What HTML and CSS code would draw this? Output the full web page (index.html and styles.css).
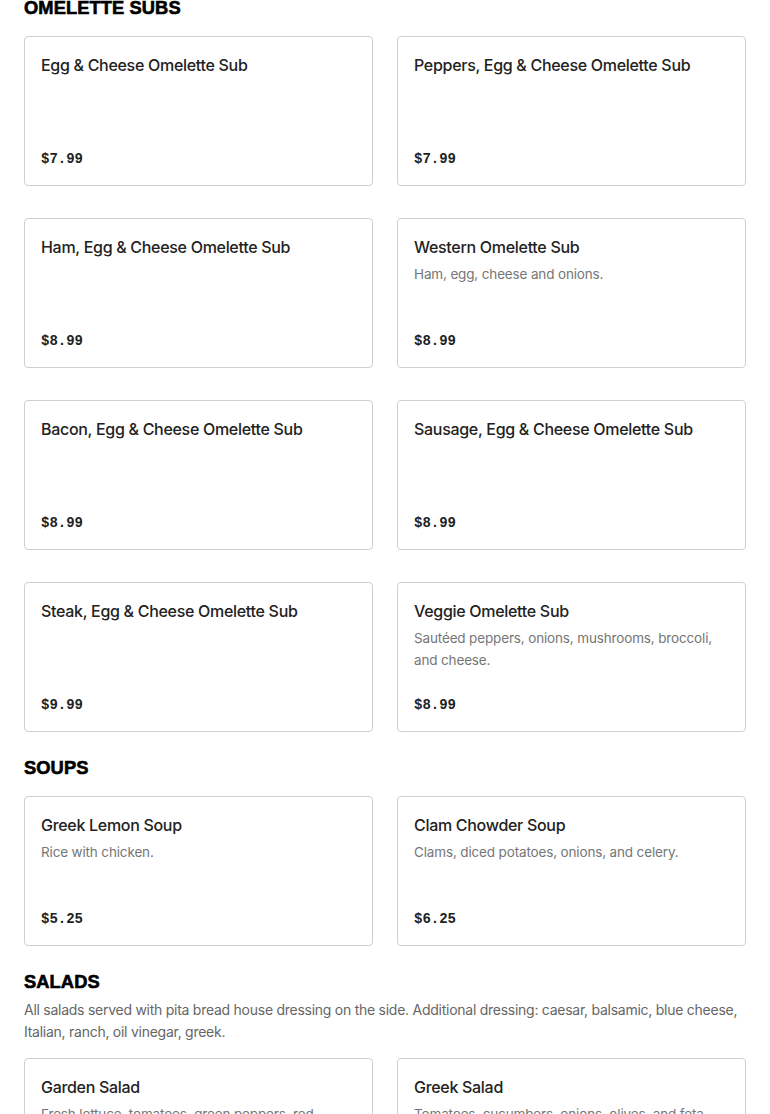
FILE: index.html
```html
<!DOCTYPE html>
<html lang="en">
<head>
<meta charset="utf-8">
<title>Menu</title>
<link rel="stylesheet" href="styles.css">
</head>
<body>
<main class="menu">
  <section class="section section-first">
    <h2 class="section-title">OMELETTE SUBS</h2>
    <div class="grid">
      <div class="card"><h3 class="item-name">Egg &amp; Cheese Omelette Sub</h3><div class="price">$7.99</div></div>
      <div class="card"><h3 class="item-name">Peppers, Egg &amp; Cheese Omelette Sub</h3><div class="price">$7.99</div></div>
      <div class="card"><h3 class="item-name">Ham, Egg &amp; Cheese Omelette Sub</h3><div class="price">$8.99</div></div>
      <div class="card"><h3 class="item-name">Western Omelette Sub</h3><p class="item-desc">Ham, egg, cheese and onions.</p><div class="price">$8.99</div></div>
      <div class="card"><h3 class="item-name">Bacon, Egg &amp; Cheese Omelette Sub</h3><div class="price">$8.99</div></div>
      <div class="card"><h3 class="item-name">Sausage, Egg &amp; Cheese Omelette Sub</h3><div class="price">$8.99</div></div>
      <div class="card"><h3 class="item-name">Steak, Egg &amp; Cheese Omelette Sub</h3><div class="price">$9.99</div></div>
      <div class="card"><h3 class="item-name">Veggie Omelette Sub</h3><p class="item-desc">Sautéed peppers, onions, mushrooms, broccoli, and cheese.</p><div class="price">$8.99</div></div>
    </div>
  </section>
  <section class="section">
    <h2 class="section-title">SOUPS</h2>
    <div class="grid">
      <div class="card"><h3 class="item-name">Greek Lemon Soup</h3><p class="item-desc">Rice with chicken.</p><div class="price">$5.25</div></div>
      <div class="card"><h3 class="item-name">Clam Chowder Soup</h3><p class="item-desc">Clams, diced potatoes, onions, and celery.</p><div class="price">$6.25</div></div>
    </div>
  </section>
  <section class="section">
    <h2 class="section-title">SALADS</h2>
    <p class="section-desc">All salads served with pita bread house dressing on the side. Additional dressing: caesar, balsamic, blue cheese, Italian, ranch, oil vinegar, greek.</p>
    <div class="grid">
      <div class="card"><h3 class="item-name">Garden Salad</h3><p class="item-desc">Fresh lettuce, tomatoes, green peppers, red onions, cucumbers, and carrots.</p><div class="price">$7.99</div></div>
      <div class="card"><h3 class="item-name">Greek Salad</h3><p class="item-desc">Tomatoes, cucumbers, onions, olives, and feta cheese.</p><div class="price">$8.99</div></div>
    </div>
  </section>
</main>
</body>
</html>
```
FILE: styles.css
```css
html, body {
  margin: 0;
  padding: 0;
  background: #ffffff;
}
body {
  font-family: "Inter", "Liberation Sans", sans-serif;
  color: #222222;
  overflow: hidden;
}
.menu {
  padding: 0 24px;
}
.section {
  margin-top: 24px;
}
.section-first {
  margin-top: -4px;
}
.section-title {
  margin: 0 0 16px;
  font-family: "Liberation Sans", "Arial", sans-serif;
  font-weight: 900;
  font-size: 18.3px;
  line-height: 24px;
  color: #000000;
  -webkit-text-stroke: 0.6px #000;
  letter-spacing: 0.1px;
}
.section-desc {
  margin: -11px 0 15px;
  font-size: 14px;
  letter-spacing: -0.26px;
  line-height: 22px;
  color: #666666;
}
.grid {
  display: grid;
  grid-template-columns: 1fr 1fr;
  column-gap: 24px;
  row-gap: 32px;
}
.card {
  box-sizing: border-box;
  min-height: 150px;
  border: 1px solid #cfcfcf;
  border-radius: 4px;
  padding: 16px;
  display: flex;
  flex-direction: column;
}
.item-name {
  margin: 0;
  font-size: 16px;
  letter-spacing: -0.3px;
  font-weight: 500;
  line-height: 24px;
  color: #222222;
}
.item-desc {
  margin: 4px 0 0;
  font-size: 13.5px;
  letter-spacing: -0.15px;
  line-height: 22px;
  color: #767676;
}
.price {
  margin-top: auto;
  padding-top: 12px;
  font-family: "Liberation Mono", monospace;
  font-weight: 700;
  font-size: 14px;
  line-height: 20px;
  color: #222222;
}
```
